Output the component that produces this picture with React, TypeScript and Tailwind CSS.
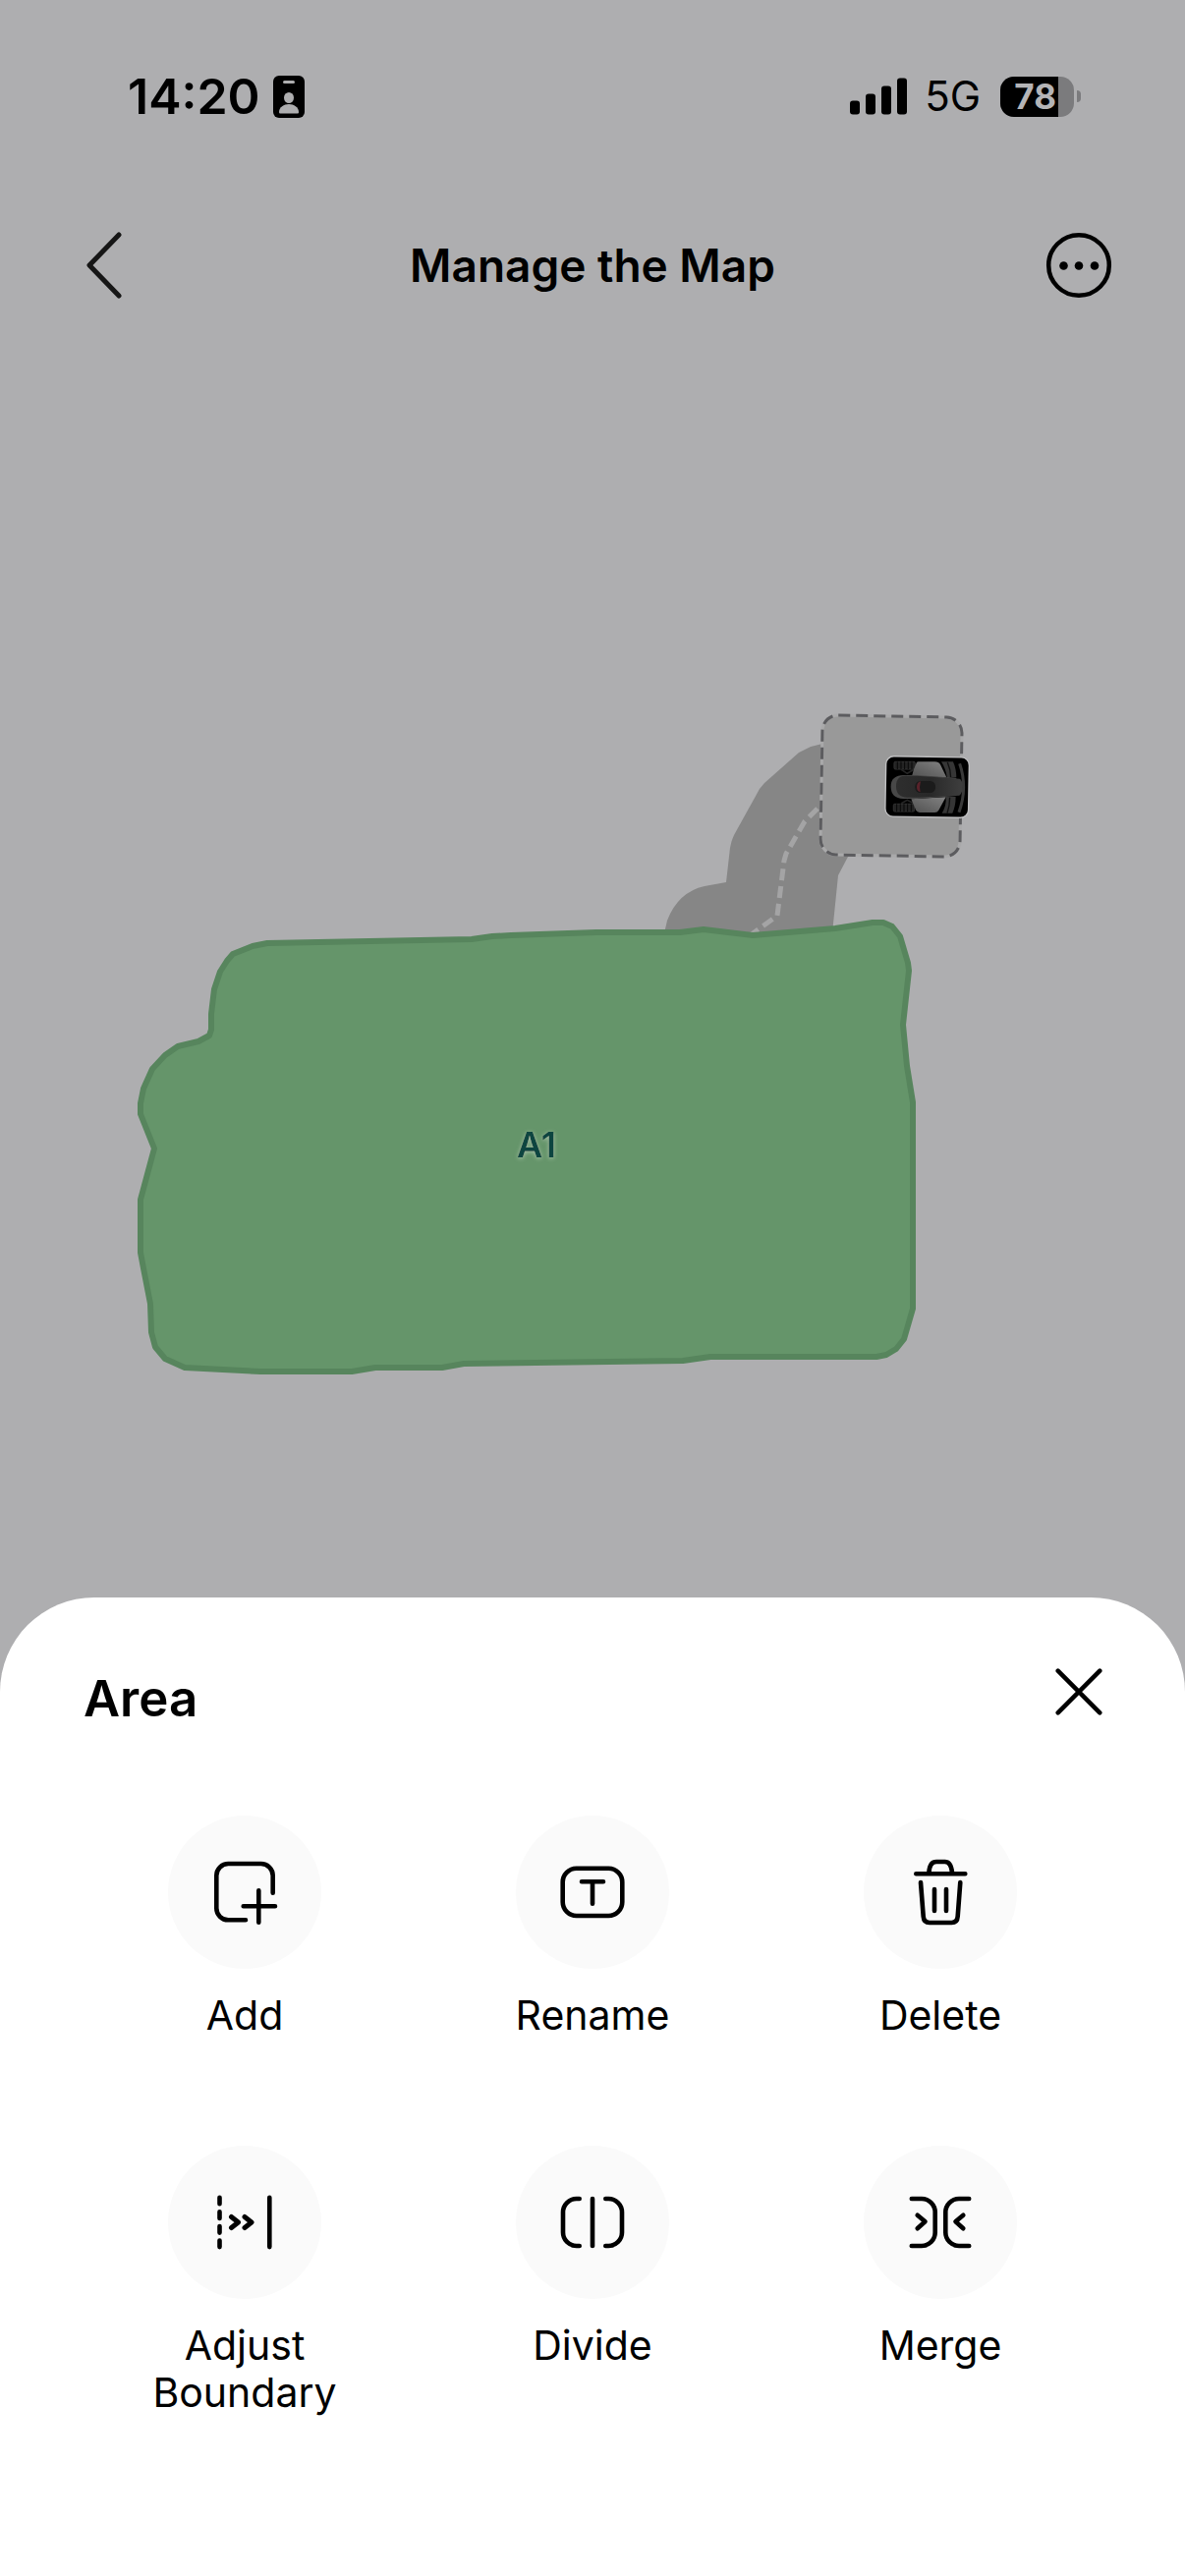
import type { ReactNode } from 'react';

interface AreaAction {
  key: string;
  label: string;
  icon: ReactNode;
}

const areaActions: AreaAction[] = [
  {
    key: 'add',
    label: 'Add',
    icon: (
      <>
        <path d="M64.7 36.7V19a12 12 0 0 0-12-12H19.3a12 12 0 0 0-12 12v33.3a12 12 0 0 0 12 12H37" />
        <path d="M34.7 50.3H67M50.3 34.3v32.4" />
      </>
    ),
  },
  {
    key: 'rename',
    label: 'Rename',
    icon: (
      <>
        <rect x="5.7" y="11.7" width="60.6" height="48.3" rx="14" />
        <path d="M25 25.3h22M36 25.3v22.4" />
      </>
    ),
  },
  {
    key: 'delete',
    label: 'Delete',
    icon: (
      <>
        <path d="M11.3 17.3h50M24.4 16C24.8 9 27 5 32 5h8.6c5 0 6.7 4 7.4 11" />
        <path d="M16 26l2.7 34.5c.3 4.5 2.5 6.5 6.3 6.5h22.5c3.8 0 5.9-2 6.2-6.5L56.3 26" />
        <path d="M30 33v22M42 33v22" />
      </>
    ),
  },
  {
    key: 'adjust',
    label: 'Adjust Boundary',
    icon: (
      <>
        <path d="M10.5 10.7v6.6M10.5 25.3v6.6M10.5 40v6.6M10.5 54.5v6.6M61.3 10.7v50.4" />
        <path d="M22.5 30.5l7 5.5-7 5.5M36 30.5l7 5.5-7 5.5" strokeWidth="5" />
      </>
    ),
  },
  {
    key: 'divide',
    label: 'Divide',
    icon: (
      <>
        <path d="M22.7 12h-3A13.7 13.7 0 0 0 6 25.7v20.6A13.7 13.7 0 0 0 19.7 60h3" />
        <path d="M49.3 12h3A13.7 13.7 0 0 1 66 25.7v20.6A13.7 13.7 0 0 1 52.3 60h-3" />
        <path d="M36 12v48" />
      </>
    ),
  },
  {
    key: 'merge',
    label: 'Merge',
    icon: (
      <>
        <path d="M6.8 12H17a13.7 13.7 0 0 1 13.7 13.7v20.6A13.7 13.7 0 0 1 17 60H6.8" />
        <path d="M65.2 12H55a13.7 13.7 0 0 0-13.7 13.7v20.6A13.7 13.7 0 0 0 55 60h10.2" />
        <path d="M12.7 28.7l7.8 6.6-7.8 7M59.3 28.7l-7.8 6.6 7.8 7" />
      </>
    ),
  },
];

const areaOutline =
  '272,960 257,963 237,971 231,978 224,989 218,1007 215,1032 215,1048 213,1054 202,1060 181,1065 168,1074 ' +
  '155,1088 146,1108 143,1123 143,1134 157,1169 143,1221 143,1275 146,1291 153,1327 154,1356 158,1371 ' +
  '168,1383 188,1392 265,1396 358,1396 382,1392 450,1392 472,1388 695,1385 723,1381 892,1381 902,1379 ' +
  '912,1373 920,1363 929,1332 929,1122 923,1085 919,1043 925,988 924,980 916,953 908,943 899,939 888,939 ' +
  '850,945 766,952 716,946 692,949 607,949 520,952 501,953 480,956';

function StatusBar() {
  return (
    <div className="flex h-[196px] items-center justify-between pl-[130px] pr-[106px]">
      <div className="flex items-center gap-[13px]">
        <span className="text-[50px] leading-none font-semibold">14:20</span>
        <svg className="h-[43px] w-[32px]" viewBox="0 0 32 43" aria-hidden="true">
          <rect width="32" height="43" rx="6" fill="#000" />
          <rect x="10" y="5" width="12" height="3" rx="1.5" fill="#aeaeb0" />
          <ellipse cx="16" cy="22.5" rx="5" ry="5.5" fill="#aeaeb0" />
          <path d="M6 37c0-5 5-8 10-8s10 3 10 8c0 1-.5 1.5-1.5 1.5h-17C6.5 38.5 6 38 6 37z" fill="#aeaeb0" />
        </svg>
      </div>
      <div className="flex items-center">
        <svg className="h-[38px] w-[58px]" viewBox="0 0 58 38" aria-hidden="true">
          <rect x="0" y="23.5" width="10" height="14" rx="3" />
          <rect x="16" y="16.5" width="10" height="21" rx="3" />
          <rect x="32" y="8.5" width="10" height="29" rx="3" />
          <rect x="48" y="0.5" width="10" height="37" rx="3" />
        </svg>
        <span className="ml-[18px] text-[42px] leading-none">5G</span>
        <div className="ml-[20px] flex h-[41px] w-[75px] items-center overflow-hidden rounded-[14px] bg-[#7b7b7d]">
          <div className="flex h-full w-[59px] items-center justify-end bg-black pr-[2px] text-[35px] leading-none font-bold text-[#b4b4b6]">
            78
          </div>
        </div>
        <div className="ml-[3px] h-[12px] w-[4px] rounded-r-full bg-[#7b7b7d]" />
      </div>
    </div>
  );
}

function Header() {
  return (
    <header className="flex h-[148px] items-center justify-between px-[72px]">
      <button type="button" aria-label="Back" className="size-[72px]">
        <svg viewBox="0 0 72 72" fill="none" stroke="#161616" strokeWidth="5" strokeLinecap="round" strokeLinejoin="round">
          <path d="M49 5L19 36l30 31" />
        </svg>
      </button>
      <h1 className="text-[46px] leading-none font-semibold">Manage the Map</h1>
      <button type="button" aria-label="More options" className="size-[72px]">
        <svg viewBox="0 0 72 72">
          <circle cx="36" cy="36" r="30.8" fill="none" stroke="#000" strokeWidth="4.5" />
          <circle cx="20.5" cy="36.5" r="4.3" />
          <circle cx="36" cy="36.5" r="4.3" />
          <circle cx="52" cy="36.5" r="4.3" />
        </svg>
      </button>
    </header>
  );
}

/* Top view of the mower, drawn at three times its size on the map */
function Mower() {
  return (
    <g transform="translate(640 700) scale(0.3333)">
      <g transform="rotate(1 911 303)">
        <rect x="782" y="209" width="258" height="188" rx="26" fill="#c0c0c2" />
        <rect x="786" y="213" width="250" height="180" rx="22" fill="#000" />
      </g>
      {/* Wheels */}
      <g fill="#232323" stroke="#333" strokeWidth="3">
        <rect x="810" y="226" width="64" height="23" rx="4" />
        <rect x="808" y="355" width="64" height="23" rx="4" />
      </g>
      <g stroke="#080808" strokeWidth="3">
        <path d="M820 226v23M831 226v23M842 226v23M853 226v23M864 226v23M818 355v23M829 355v23M840 355v23M851 355v23M862 355v23" />
      </g>
      <path d="M832 250l18 12 20-12M832 353l18-10 20 10" fill="none" stroke="#252525" strokeWidth="5" />
      <path d="M954 226h36q10 22 10 48l-28 2q-4-28-18-50z" fill="#363636" />
      <path d="M968 333h30q0 28-10 50h-32q14-22 12-50z" fill="#363636" />
      <path d="M973 228q10 22 10 46M980 335q0 26-8 48" fill="none" stroke="#101010" strokeWidth="4" />
      <path d="M1010 232q12 34 12 72t-14 76" fill="none" stroke="#3a3a3a" strokeWidth="9" />
      {/* Side panels */}
      <path d="M884 226h50q12 0 18 10l18 38-106-4q6-24 14-40 2-4 6-4z" fill="url(#mowerPanel)" />
      <path d="M862 340l106-6-22 40q-4 7-12 7h-46q-8 0-12-8z" fill="url(#mowerPanel)" />
      {/* Body */}
      <path d="M1000 276l-120-9h-40q-40 0-40 35t38 37h42l120-9z" fill="#484848" />
      <path d="M1010 278q9 4 9 24t-10 27l-129 6h-30q-34 0-34-34t34-32h30z" fill="url(#mowerBody)" />
      <rect x="874" y="285" width="62" height="36" rx="16" fill="#1b1b1b" />
      <path d="M891 286q-12 4-12 17t11 16q-4-16 1-33z" fill="#58222a" />
    </g>
  );
}

function AreaMap() {
  return (
    <main className="flex-1">
      <svg className="block w-full" viewBox="0 344 1206 1282" role="img" aria-label="Map with area A1">
        <defs>
          <linearGradient id="mowerPanel" x1="0" y1="1" x2="1" y2="0">
            <stop offset="0" stopColor="#505050" />
            <stop offset="1" stopColor="#828282" />
          </linearGradient>
          <linearGradient id="mowerBody" x1="0" y1="0" x2="1" y2="0">
            <stop offset="0" stopColor="#2e2e2e" />
            <stop offset="0.5" stopColor="#282828" />
            <stop offset="1" stopColor="#3e3e3e" />
          </linearGradient>
          <filter id="labelGlow" x="-50%" y="-50%" width="200%" height="200%">
            <feDropShadow dx="0" dy="1" stdDeviation="2" floodColor="#c4d4c4" floodOpacity="0.7" />
          </filter>
        </defs>

        {/* Passage to the charging station */}
        <path
          d="M850 755L837 757L825 760L813 766L778 797L773 803L747 850Q744 856 743 863L739 898L717 902Q690 908 679 937L676 950L847 950L853 891L863 872L880 840z"
          fill="#868686"
        />
        <path
          d="M832 823L819 836L800 869L798 876L791 932L762 953"
          fill="none"
          stroke="#a4a4a5"
          strokeWidth="5"
          strokeDasharray="12 6"
        />

        {/* Charging station */}
        <g transform="rotate(1 907 800)" strokeWidth="3">
          <rect x="836" y="729" width="142" height="142" rx="16" fill="#999" stroke="#a9a9aa" />
          <rect x="836" y="729" width="142" height="142" rx="16" fill="none" stroke="#5c5c5f" strokeDasharray="12 6" />
        </g>
        <Mower />

        <polygon points={areaOutline} fill="#65956a" stroke="#57855d" strokeWidth="6" strokeLinejoin="round" />
        <text
          x="546"
          y="1178"
          textAnchor="middle"
          className="fill-[#08453f] text-[36px] font-semibold"
          filter="url(#labelGlow)"
        >
          A1
        </text>
      </svg>
    </main>
  );
}

function AreaSheet() {
  return (
    <section className="rounded-t-[96px] bg-white pt-[72px] pb-[163px]" aria-label="Area">
      <div className="flex items-start justify-between pr-[84px] pl-[85px]">
        <h2 className="text-[51px] leading-[62px] font-semibold">Area</h2>
        <button type="button" aria-label="Close" className="size-[48px]">
          <svg viewBox="0 0 48 48" fill="none" stroke="#000" strokeWidth="4.5" strokeLinecap="round">
            <path d="M2.7 2.7l42.6 42.6M45.3 2.7L2.7 45.3" />
          </svg>
        </button>
      </div>
      <div className="mt-[88px] grid grid-cols-3 gap-y-[109px] px-[72px]">
        {areaActions.map((action) => (
          <button key={action.key} type="button" className="flex flex-col items-center gap-[23px]">
            <span className="flex size-[156px] items-center justify-center rounded-full bg-[#fafafa]">
              <svg
                className="size-[72px]"
                viewBox="0 0 72 72"
                fill="none"
                stroke="#000"
                strokeWidth="4.6"
                strokeLinecap="round"
                strokeLinejoin="round"
                aria-hidden="true"
              >
                {action.icon}
              </svg>
            </span>
            <span className="max-w-[224px] text-[41px] leading-[48px]">{action.label}</span>
          </button>
        ))}
      </div>
    </section>
  );
}

export default function App() {
  return (
    <div className="flex min-h-screen flex-col bg-[#aeaeb0] font-['Inter','Liberation_Sans',sans-serif] text-black">
      <StatusBar />
      <Header />
      <AreaMap />
      <AreaSheet />
    </div>
  );
}
